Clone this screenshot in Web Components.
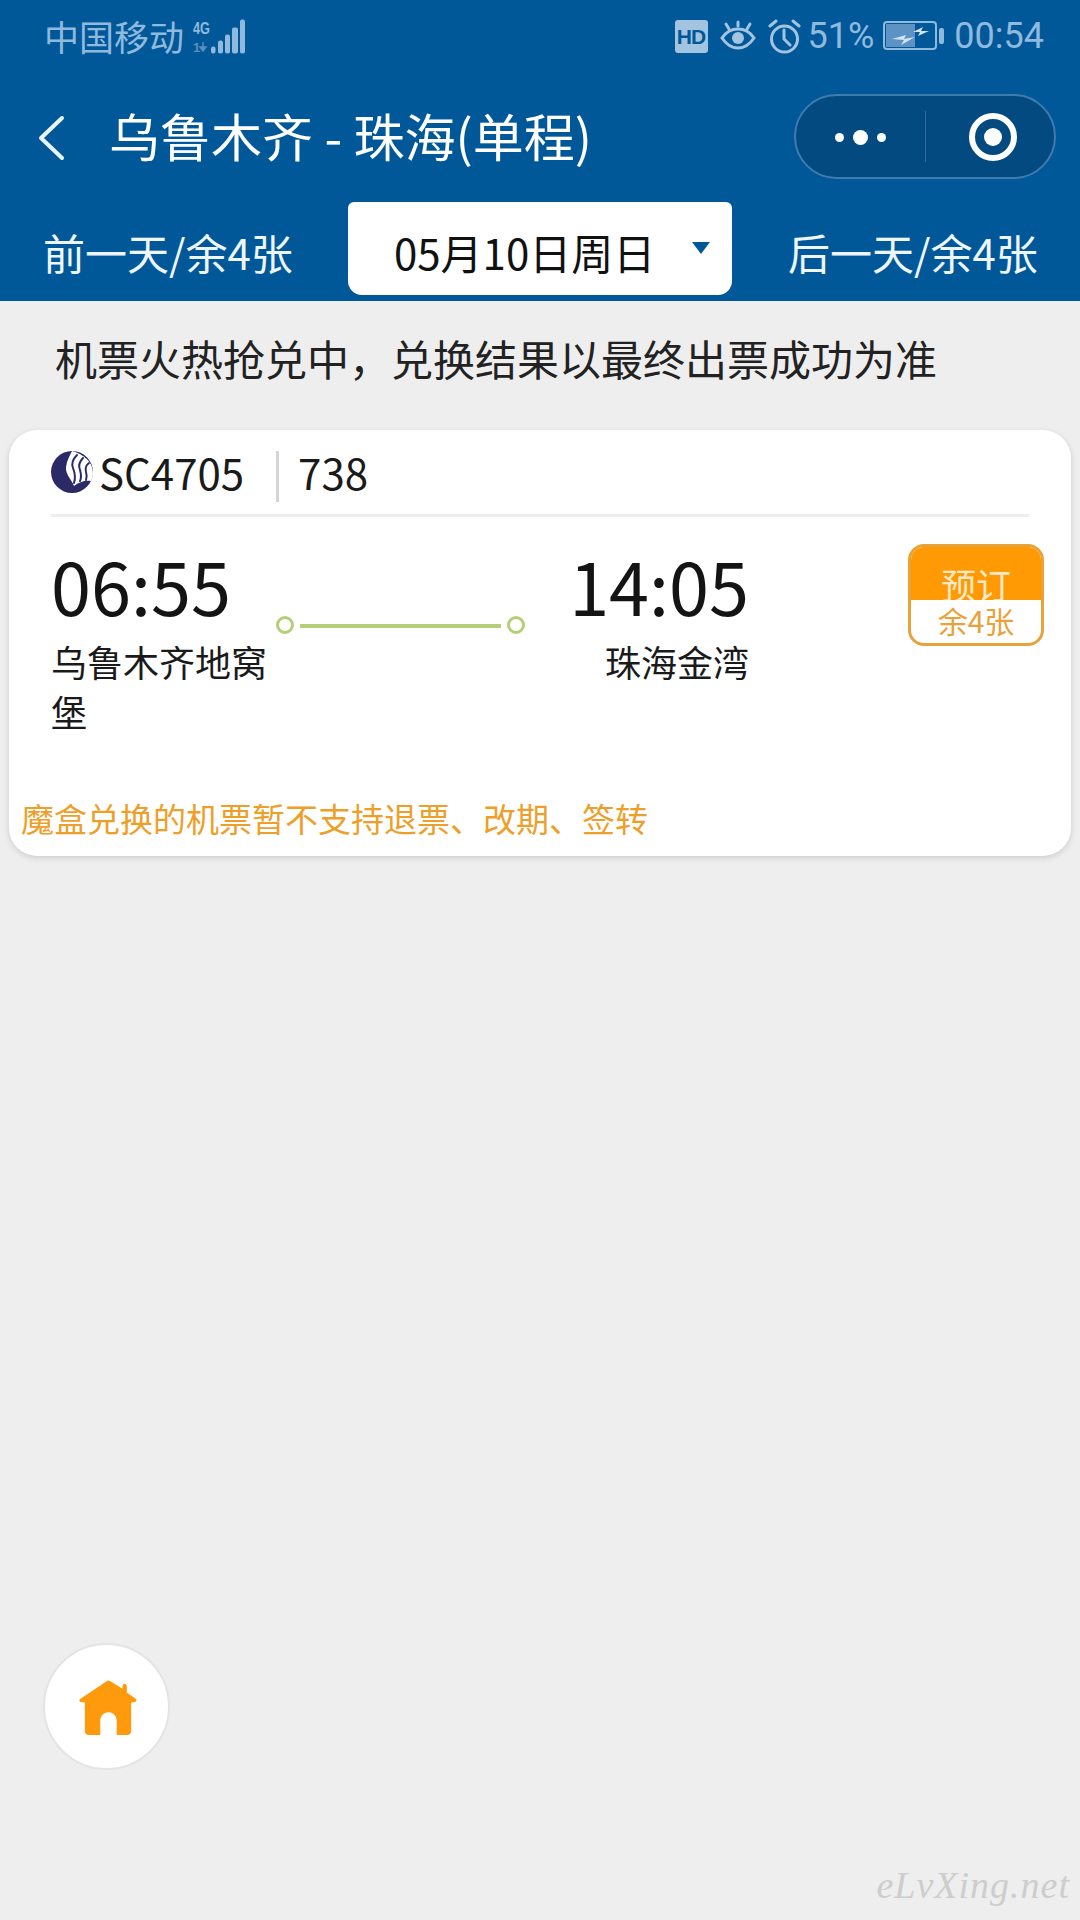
<!DOCTYPE html>
<html lang="zh">
<head>
<meta charset="utf-8">
<title>乌鲁木齐 - 珠海(单程)</title>
<style>
  html, body { margin: 0; padding: 0; }
  body {
    width: 1080px;
    height: 1920px;
    overflow: hidden;
    background: #eeeeee;
    color: #1a1a1a;
    font-family: "Noto Sans CJK SC", "Noto Sans", sans-serif;
    position: relative;
  }
</style>
</head>
<body>
  <app-header>
    <status-bar></status-bar>
    <nav-bar title="乌鲁木齐 - 珠海(单程)"></nav-bar>
    <date-tabs prev="前一天/余4张" date="05月10日周日" next="后一天/余4张"></date-tabs>
  </app-header>
  <notice-line>机票火热抢兑中，兑换结果以最终出票成功为准</notice-line>
  <flight-card></flight-card>
  <home-fab></home-fab>
  <water-mark>eLvXing.net</water-mark>

<script>
class AppHeader extends HTMLElement {
  constructor() {
    super();
    this.attachShadow({ mode: "open" });
    this.shadowRoot.innerHTML = `
      <style>
        :host { display: flex; flex-direction: column; height: 301px; background: #015899; }
      </style>
      <slot></slot>`;
  }
}

class StatusBar extends HTMLElement {
  constructor() {
    super();
    this.attachShadow({ mode: "open" });
  }

  static get styles() {
    return `
      :host {
        display: flex;
        align-items: center;
        height: 72px;
        padding: 0 36px 0 44px;
        color: #8fbade;
        font-size: 35px;
      }
      .carrier { position: relative; top: -1px; }
      .signal { margin-left: 9px; display: block; }
      .right { margin-left: auto; display: flex; align-items: center; font-family: Roboto, sans-serif; }
      .hd {
        width: 33px; height: 33px; border-radius: 3px; background: #a3c4e0; color: #015899;
        font: bold 21px/33px "Liberation Sans", sans-serif; text-align: center; letter-spacing: -1px;
      }
      svg { display: block; }
      .eye { margin-left: 12px; }
      .clock { margin-left: 12px; }
      .pct { margin-left: 7px; font-size: 36px; }
      .batt { margin-left: 9px; }
      .time { margin-left: 10px; font-size: 36px; }
    `;
  }

  connectedCallback() {
    this.shadowRoot.innerHTML = `
      <style>${StatusBar.styles}</style>
      <span class="carrier">中国移动</span>
      <svg class="signal" width="52" height="36" viewBox="0 0 52 36">
        <text x="0" y="16" font-family="'Liberation Sans', sans-serif" font-weight="700" font-size="17" textLength="17" lengthAdjust="spacingAndGlyphs" fill="#8fbade">4G</text>
        <text x="0" y="34" font-family="'Liberation Sans', sans-serif" font-weight="700" font-size="13" fill="#5a8fbe">1</text>
        <path d="M10 24v8M7 29l3 4 3-4z" fill="#5a8fbe" stroke="#5a8fbe" stroke-width="1.500"/>
        <g fill="#8fbade">
          <rect x="18" y="28.500" width="4.500" height="7" rx="2"/>
          <rect x="25" y="22.500" width="5" height="13" rx="2"/>
          <rect x="32" y="16.500" width="5" height="19" rx="2"/>
          <rect x="39" y="9.500" width="6" height="26" rx="2"/>
          <rect x="47" y="1.500" width="5" height="34" rx="2"/>
        </g>
      </svg>
      <div class="right">
        <span class="hd">HD</span>
        <svg class="eye" width="36" height="33" viewBox="0 0 36 33" fill="none" stroke="#a3c4e0" stroke-width="3" stroke-linecap="round">
          <path d="M2 18c4-6 9-9 16-9s12 3 16 9c-4 6-9 10-16 10S6 24 2 18z"/>
          <circle cx="18" cy="18" r="6" fill="#a3c4e0" stroke="none"/>
          <path d="M18 2v4M6 4l3 5M30 4l-3 5"/>
        </svg>
        <svg class="clock" width="33" height="35" viewBox="0 0 33 35" fill="none" stroke="#a3c4e0" stroke-width="3" stroke-linecap="round">
          <circle cx="16.500" cy="20" r="13"/>
          <path d="M16 11v9l6 6M2 7l6-5M31 7l-6-5"/>
        </svg>
        <span class="pct">51%</span>
        <svg class="batt" width="61" height="30" viewBox="0 0 61 30">
          <rect x="1" y="1" width="52" height="27" rx="3" fill="none" stroke="#8fbade" stroke-width="2"/>
          <rect x="3" y="3" width="29" height="23" fill="#5d93c4"/>
          <path d="M9 18l14-4-2 4 11-2-14 8 3-5zM30 11l10-5-2 4 8 0-11 5 2-4z" fill="#d3e4f2"/>
          <rect x="56" y="7" width="5" height="16" rx="2" fill="#8fbade"/>
        </svg>
        <span class="time">00:54</span>
      </div>`;
  }
}

class NavBar extends HTMLElement {
  constructor() {
    super();
    this.attachShadow({ mode: "open" });
  }

  static get styles() {
    return `
      :host {
        display: flex;
        align-items: center;
        height: 130px;
        padding: 0 24px 0 38px;
        color: #fff;
        box-sizing: border-box;
      }
      .back { display: block; width: 30px; height: 46px; position: relative; top: 1px; }
      .title { margin-left: 41px; font-size: 51px; line-height: 60px; position: relative; top: -2px; white-space: nowrap; }
      nav-capsule { margin-left: auto; }
    `;
  }

  connectedCallback() {
    this.shadowRoot.innerHTML = `
      <style>${NavBar.styles}</style>
      <svg class="back" viewBox="0 0 30 46" fill="none" stroke="#eaf4fb" stroke-width="4" stroke-linecap="round" stroke-linejoin="round">
        <path d="M24 3L3 23l21 20"/>
      </svg>
      <span class="title">${this.getAttribute("title")}</span>
      <nav-capsule></nav-capsule>`;
  }
}

class NavCapsule extends HTMLElement {
  constructor() {
    super();
    this.attachShadow({ mode: "open" });
    this.shadowRoot.innerHTML = `
      <style>
        :host {
          display: flex;
          align-items: center;
          width: 262px;
          height: 85px;
          box-sizing: border-box;
          border: 2px solid #3f7bae;
          border-radius: 43px;
          background: #024a80;
          position: relative;
          top: -1px;
        }
        .side { flex: 1; display: flex; align-items: center; justify-content: center; padding-top: 2px; }
        .dots { gap: 9px; }
        .dot { width: 9px; height: 9px; border-radius: 50%; background: #fff; }
        .dot.big { width: 15px; height: 15px; }
        .sep { width: 1px; height: 51px; background: #2f6b9c; }
        .ring {
          width: 48px; height: 48px; box-sizing: border-box; border: 6px solid #fff; border-radius: 50%;
          display: flex; align-items: center; justify-content: center;
          margin-left: 6px;
        }
        .ring i { width: 18px; height: 18px; border-radius: 50%; background: #fff; }
      </style>
      <div class="side dots"><span class="dot"></span><span class="dot big"></span><span class="dot"></span></div>
      <div class="sep"></div>
      <div class="side"><div class="ring"><i></i></div></div>`;
  }
}

class DateTabs extends HTMLElement {
  constructor() {
    super();
    this.attachShadow({ mode: "open" });
  }

  static get styles() {
    return `
      :host {
        display: grid;
        grid-template-columns: 348px 384px 1fr;
        height: 99px;
        font-size: 42px;
        color: #eef6fc;
      }
      .side { display: flex; align-items: center; height: 93px; padding-top: 6px; box-sizing: border-box; white-space: nowrap; }
      .prev { padding-left: 43px; }
      .next { padding-left: 56px; }
      .date {
        height: 93px;
        background: #fff;
        color: #111;
        border-radius: 6px 6px 14px 14px;
        display: flex;
        align-items: center;
        padding: 6px 22px 0 46px;
        box-sizing: border-box;
        white-space: nowrap;
      }
      .arrow { margin-left: auto; margin-top: -7px; width: 0; height: 0; border: 9px solid transparent; border-top: 12px solid #015899; border-bottom: 0; }
    `;
  }

  connectedCallback() {
    this.shadowRoot.innerHTML = `
      <style>${DateTabs.styles}</style>
      <div class="side prev">${this.getAttribute("prev")}</div>
      <div class="date"><span>${this.getAttribute("date")}</span><i class="arrow"></i></div>
      <div class="side next">${this.getAttribute("next")}</div>`;
  }
}

class NoticeLine extends HTMLElement {
  constructor() {
    super();
    this.attachShadow({ mode: "open" });
    this.shadowRoot.innerHTML = `
      <style>
        :host {
          display: flex;
          align-items: center;
          height: 129px;
          padding: 0 0 17px 55px;
          box-sizing: border-box;
          font-size: 42px;
          color: #222;
          white-space: nowrap;
        }
      </style>
      <slot></slot>`;
  }
}

class FlightCard extends HTMLElement {
  constructor() {
    super();
    this.attachShadow({ mode: "open" });
  }

  static get styles() {
    return `
      :host {
        display: flex;
        flex-direction: column;
        height: 426px;
        margin: 0 9px;
        background: #fff;
        border-radius: 28px;
        box-shadow: 0 2px 6px rgba(0,0,0,.14);
        position: relative;
      }
      .head {
        display: flex;
        align-items: center;
        height: 84px;
        margin: 0 42px 0 42px;
        border-bottom: 3px solid #eeeeee;
        font-size: 42px;
        color: #1a1a1a;
        box-sizing: content-box;
      }
      .logo { display: block; width: 42px; height: 42px; }
      .no, .model { line-height: 50px; }
      .no { margin-left: 6px; }
      .divider { width: 3px; height: 51px; background: #d5d5d5; margin: 8px 19px 0 32px; }
      .body { display: flex; flex: 1; align-items: flex-start; padding: 29px 27px 0 42px; }
      .stop { display: flex; flex-direction: column; width: 216px; }
      .stop .time { font-size: 72px; line-height: 78px; color: #141414; white-space: nowrap; }
      .stop .city { font-size: 36px; line-height: 50px; color: #1a1a1a; margin-top: 12px; }
      .arr { width: 180px; margin-left: 44px; align-items: flex-end; }
      flight-line { margin-top: 70px; margin-left: 9px; }
      book-button { margin-left: auto; margin-top: -2px; }
      .rule { height: 63px; padding-left: 12px; font-size: 33px; line-height: 50px; color: #ee9f2a; white-space: nowrap; }
    `;
  }

  connectedCallback() {
    this.shadowRoot.innerHTML = `
      <style>${FlightCard.styles}</style>
      <div class="head">
        <svg class="logo" viewBox="0 0 42 42">
          <circle cx="21" cy="21" r="21" fill="#2c2a66"/>
          <path d="M21 0C29 2 42 9 42 22c0 3-1 6-2 8-6-1-12 1-17 5-2-6-9-12-8-19 1-7 4-12 6-16z" fill="#fff"/>
          <g fill="none" stroke="#2c2a66" stroke-width="2" stroke-linecap="round">
            <path d="M26 4c-4 4-6 8-4 13 2 5 3 9 1 15"/>
            <path d="M32 7c-3 3-5 7-3 12 1 4 2 7 0 11"/>
            <path d="M38 12c-3 2-4 5-3 9 1 3 1 5 0 8"/>
          </g>
        </svg>
        <span class="no">SC4705</span>
        <span class="divider"></span>
        <span class="model">738</span>
      </div>
      <div class="body">
        <div class="stop">
          <span class="time">06:55</span>
          <span class="city">乌鲁木齐地窝堡</span>
        </div>
        <flight-line></flight-line>
        <div class="stop arr">
          <span class="time">14:05</span>
          <span class="city">珠海金湾</span>
        </div>
        <book-button left="余4张"></book-button>
      </div>
      <div class="rule">魔盒兑换的机票暂不支持退票、改期、签转</div>`;
  }
}

class FlightLine extends HTMLElement {
  constructor() {
    super();
    this.attachShadow({ mode: "open" });
    this.shadowRoot.innerHTML = `
      <style>
        :host { display: flex; align-items: center; gap: 4px; width: 249px; }
        .end { width: 18px; height: 18px; box-sizing: border-box; border: 3px solid #b5cf78; border-radius: 50%; flex: none; }
        .track { flex: 1; height: 4px; background: #b5cf78; margin: 0 2px; position: relative; top: 1px; }
      </style>
      <span class="end"></span><span class="track"></span><span class="end"></span>`;
  }
}

class BookButton extends HTMLElement {
  constructor() {
    super();
    this.attachShadow({ mode: "open" });
  }

  static get styles() {
    return `
      :host {
        display: flex;
        flex-direction: column;
        width: 136px;
        height: 102px;
        flex: none;
        box-sizing: border-box;
        border: 3px solid #e8a23a;
        border-radius: 16px;
        overflow: hidden;
        background: #fff;
      }
      .top {
        background: #ff9a05;
        margin: -3px -3px 0;
        color: #fde9c6;
        font-size: 35px;
        line-height: 35px;
        text-align: center;
        overflow: hidden;
        padding-top: 22px;
        box-sizing: content-box;
        height: 34px;
      }
      .left { flex: 1; color: #e8a23a; font-size: 30px; line-height: 40px; text-align: center; }
    `;
  }

  connectedCallback() {
    this.shadowRoot.innerHTML = `
      <style>${BookButton.styles}</style>
      <div class="top">预订</div>
      <div class="left">${this.getAttribute("left")}</div>`;
  }
}

class HomeFab extends HTMLElement {
  constructor() {
    super();
    this.attachShadow({ mode: "open" });
    this.shadowRoot.innerHTML = `
      <style>
        :host {
          position: absolute;
          left: 43px;
          top: 1643px;
          width: 127px;
          height: 127px;
          box-sizing: border-box;
          border: 2px solid #e4e4e4;
          border-radius: 50%;
          background: #fff;
          display: flex;
          align-items: center;
          justify-content: center;
        }
        svg { display: block; width: 58px; height: 57px; margin: 2px 0 0 2px; }
      </style>
      <svg viewBox="0 0 60 58">
        <path fill="#ff9a0d" d="M29 1.500a3 3 0 0 1 3 0l13 8V7c0-3.500 4.500-3.500 4.500 0v6.500l9 6.500c2 1.500.5 3.500-1.500 3.500H54v30c0 2-2 4-4 4H39V43c0-12-17-12-17 0v14.500H10c-2 0-4-2-4-4v-30H2.500c-2 0-3-2-1-3.500z"/>
      </svg>`;
  }
}

class WaterMark extends HTMLElement {
  constructor() {
    super();
    this.attachShadow({ mode: "open" });
    this.shadowRoot.innerHTML = `
      <style>
        :host {
          position: absolute;
          right: 10px;
          top: 1862px;
          font: italic 38px/46px "Liberation Serif", serif;
          letter-spacing: 1px;
          color: #cdcdcd;
          white-space: nowrap;
        }
      </style>
      <slot></slot>`;
  }
}

customElements.define("app-header", AppHeader);
customElements.define("status-bar", StatusBar);
customElements.define("nav-bar", NavBar);
customElements.define("nav-capsule", NavCapsule);
customElements.define("date-tabs", DateTabs);
customElements.define("notice-line", NoticeLine);
customElements.define("flight-card", FlightCard);
customElements.define("flight-line", FlightLine);
customElements.define("book-button", BookButton);
customElements.define("home-fab", HomeFab);
customElements.define("water-mark", WaterMark);
</script>
</body>
</html>
